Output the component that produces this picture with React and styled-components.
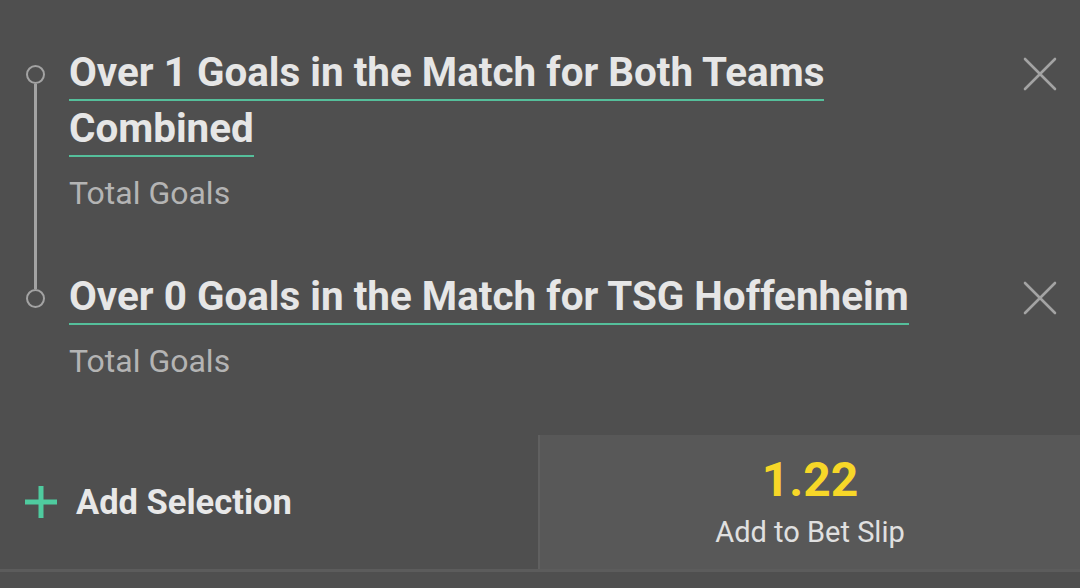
import React from "react";
import styled, { createGlobalStyle } from "styled-components";

const GlobalStyle = createGlobalStyle`
  html, body {
    margin: 0;
    padding: 0;
    background: #4f4f4f;
    font-family: Roboto, "Liberation Sans", sans-serif;
  }
`;

const selections = [
  { id: 1, title: "Over 1 Goals in the Match for Both Teams Combined", market: "Total Goals" },
  { id: 2, title: "Over 0 Goals in the Match for TSG Hoffenheim", market: "Total Goals" },
];

const CloseIcon = () => (
  <svg width="34" height="34" viewBox="0 0 34 34">
    <path d="M2 2 L32 32 M32 2 L2 32" stroke="#a3a3a3" strokeWidth="2.6" strokeLinecap="round" />
  </svg>
);

const PlusIcon = () => (
  <svg width="32" height="32" viewBox="0 0 32 32">
    <path d="M16 0 V32 M0 16 H32" stroke="#4fcb9f" strokeWidth="5" />
  </svg>
);

const App = () => {
  return (
    <React.Fragment>
      <GlobalStyle />
      <Page>
        <List>
          {selections.map((s, i) => (
            <Row key={s.id} last={i === selections.length - 1}>
              <Rail>
                <Dot />
                {i < selections.length - 1 && <Line />}
              </Rail>
              <Body>
                <Title>
                  <Underlined>{s.title}</Underlined>
                </Title>
                <Market>{s.market}</Market>
              </Body>
              <Close>
                <CloseIcon />
              </Close>
            </Row>
          ))}
        </List>
        <Footer>
          <AddSelection>
            <PlusIcon />
            <span>Add Selection</span>
          </AddSelection>
          <BetSlip>
            <Odds>1.22</Odds>
            <SlipLabel>Add to Bet Slip</SlipLabel>
          </BetSlip>
        </Footer>
        <Bottom />
      </Page>
    </React.Fragment>
  );
};

export default App;

const Page = styled.div`
  width: 1080px;
  height: 588px;
  background: #4f4f4f;
  display: flex;
  flex-direction: column;
  overflow: hidden;
`;

const List = styled.div`
  display: flex;
  flex-direction: column;
  padding-top: 45px;
`;

const Row = styled.div`
  display: flex;
  align-items: flex-start;
  margin-bottom: ${(p) => (p.last ? "0" : "57px")};
`;

const Rail = styled.div`
  position: relative;
  width: 69px;
  align-self: stretch;
  flex-shrink: 0;
`;

const Dot = styled.div`
  position: absolute;
  left: 26px;
  top: 20px;
  width: 19px;
  height: 19px;
  border: 2.5px solid #a3a3a3;
  border-radius: 50%;
  box-sizing: border-box;
`;

const Line = styled.div`
  position: absolute;
  left: 34px;
  top: 39px;
  bottom: -77px;
  width: 3px;
  background: #a3a3a3;
`;

const Body = styled.div`
  flex: 1;
  display: flex;
  flex-direction: column;
  padding-right: 80px;
`;

const Title = styled.div`
  font-size: 40.4px;
  font-weight: 700;
  color: #e6e6e6;
  line-height: 56px;
`;

const Underlined = styled.span`
  padding-bottom: 3px;
  border-bottom: 2.5px solid #55bf9b;
`;

const Market = styled.div`
  font-size: 32px;
  line-height: 37px;
  color: #b4b4b4;
  margin-top: 18px;
`;

const Close = styled.div`
  width: 34px;
  height: 34px;
  margin: 12px 23px 0 0;
  flex-shrink: 0;
`;

const Footer = styled.div`
  display: flex;
  margin-top: 55px;
  height: 134px;
`;

const AddSelection = styled.div`
  width: 538px;
  display: flex;
  align-items: center;
  gap: 19px;
  padding-left: 25px;
  box-sizing: border-box;
  font-size: 34.5px;
  font-weight: 700;
  color: #e8e8e8;
`;

const BetSlip = styled.div`
  flex: 1;
  background: #585858;
  border-left: 2px solid #606060;
  display: flex;
  flex-direction: column;
  align-items: center;
  justify-content: center;
`;

const Odds = styled.div`
  font-size: 48px;
  font-weight: 700;
  color: #f7d728;
  line-height: 48px;
`;

const SlipLabel = styled.div`
  font-size: 29px;
  line-height: 34px;
  color: #e0e0e0;
  margin-top: 11px;
`;

const Bottom = styled.div`
  height: 3px;
  background: #5c5c5c;
`;
